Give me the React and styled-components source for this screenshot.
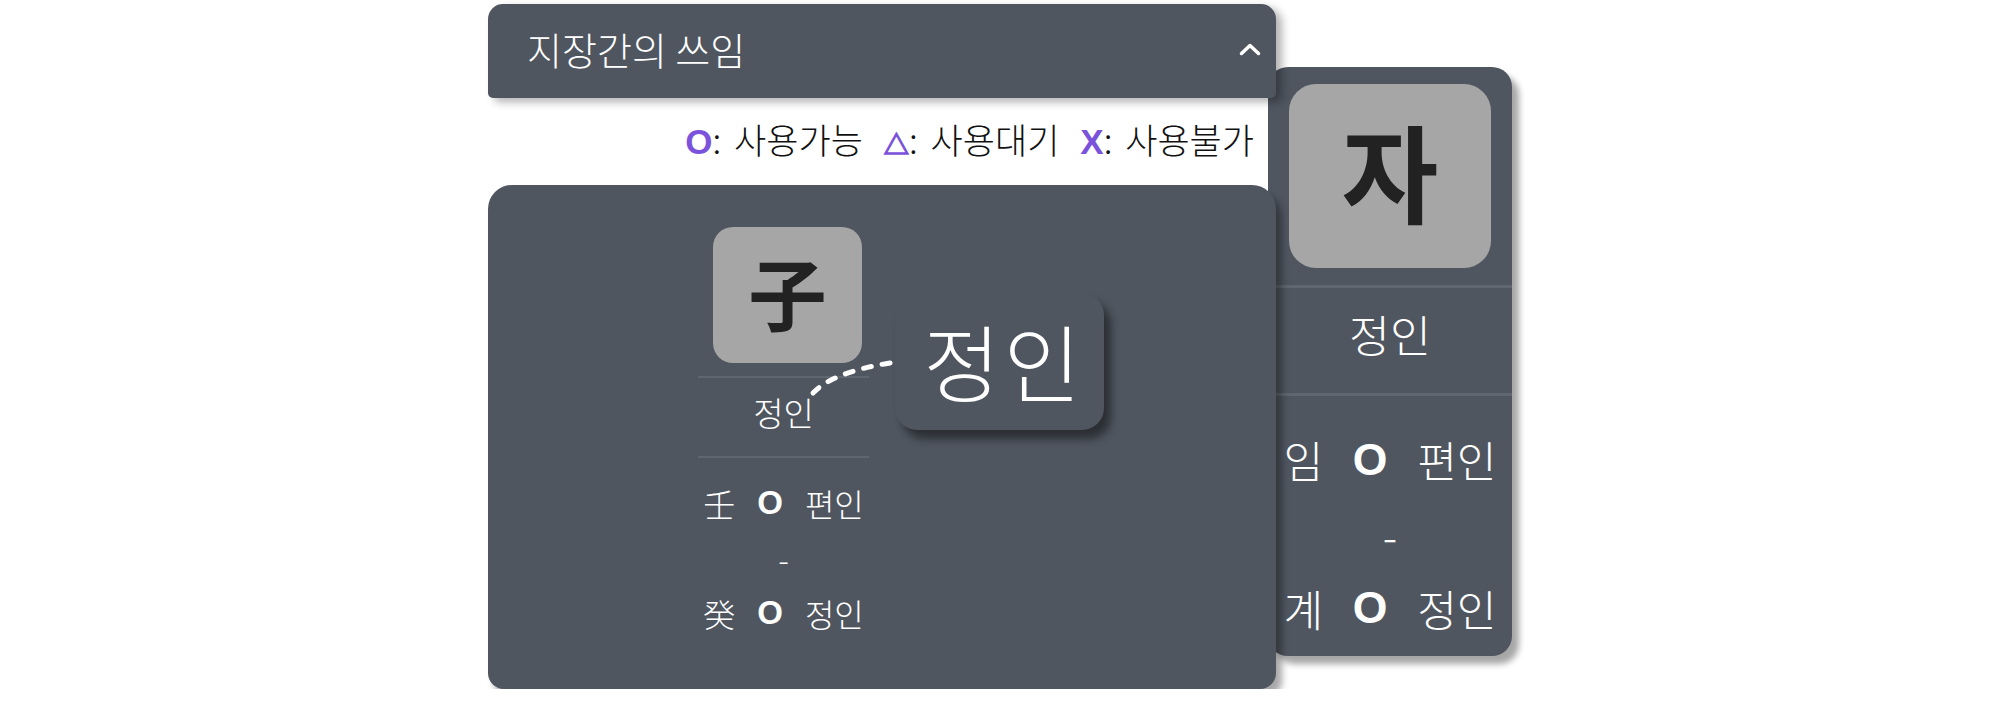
import React from "react";
import styled, { createGlobalStyle } from "styled-components";

const SLATE = "#4f5660";
const STONE = "#a6a6a6";
const INK = "#222222";
const RULE = "#5f6670";
const VIOLET = "#7b52db";
const FONT = `"Noto Sans CJK KR", "Noto Sans", sans-serif`;
const LATIN = `"Liberation Sans", "Noto Sans CJK KR", sans-serif`;

// scale a base pixel value by the pillar's magnification
const px = (n) => (p) => `${Math.round(n * p.$s * 100) / 100}px`;

const GlobalStyle = createGlobalStyle`
  html, body { margin: 0; padding: 0; background: #fff; }
  body { font-family: ${FONT}; }
  * { box-sizing: border-box; }
`;

const Stage = styled.div`
  display: flex;
  justify-content: center;
  align-items: flex-start;
  padding-top: 4px;
`;

const Main = styled.section`
  position: relative;
  z-index: 2;
  width: 788px;
  display: flex;
  flex-direction: column;
`;

const Header = styled.header`
  height: 94px;
  display: flex;
  align-items: center;
  justify-content: space-between;
  padding: 0 15px 4px 39px;
  background: ${SLATE};
  border-radius: 15px 15px 5px 5px;
  box-shadow: 6px 4px 8px rgba(0, 0, 0, 0.3);
  color: #fff;
`;

const Title = styled.h2`
  margin: 0;
  font-size: 38px;
  font-weight: 300;
  line-height: 1;
`;

const Legend = styled.div`
  height: 87px;
  display: flex;
  justify-content: flex-end;
  align-items: center;
  gap: 21px;
  padding: 0 22px 6px 0;
  font-size: 35px;
  font-weight: 300;
  color: #111;
`;

const LegendItem = styled.span`
  white-space: pre;
  word-spacing: 5px;
`;

const Mark = styled.b`
  color: ${VIOLET};
  font-weight: 700;
  font-family: ${(p) => (p.$shape ? FONT : LATIN)};
  font-size: ${(p) => (p.$shape ? "0.72em" : "1em")};
  -webkit-text-stroke: ${(p) => (p.$shape ? `1.3px ${VIOLET}` : "0")};
`;

const Board = styled.div`
  position: relative;
  height: 504px;
  display: grid;
  grid-template-columns: repeat(4, 1fr);
  align-items: start;
  padding-top: 42px;
  background: ${SLATE};
  border-radius: 24px 24px 16px 16px;
  box-shadow: 6px 8px 7px rgba(0, 0, 0, 0.35);
`;

const Pillar = styled.div`
  grid-column: ${(p) => p.$col || "auto"};
  display: flex;
  flex-direction: column;
  align-items: center;
  color: #fff;
`;

const Stem = styled.div`
  width: ${px(149)};
  height: ${px(136)};
  margin-left: ${(p) => p.$nudge || 0}px;
  padding-bottom: ${px(9)};
  border-radius: ${px(20)};
  background: ${STONE};
  color: ${INK};
  display: flex;
  align-items: center;
  justify-content: center;
  font-size: ${px(78)};
  font-weight: 700;
  line-height: 1;
`;

const Rule = styled.div`
  align-self: stretch;
  height: ${px(2)};
  margin: ${(p) => (p.$top ? px(13)(p) : "0")} ${(p) => p.$inset}px 0;
  background: ${RULE};
`;

const Ten = styled.div`
  height: ${px(78)};
  padding-bottom: ${px(9)};
  display: flex;
  align-items: center;
  justify-content: center;
  font-size: ${px(33)};
  font-weight: 300;
  line-height: 1;
`;

const Rows = styled.div`
  padding-top: ${(p) => p.$top}px;
  display: flex;
  flex-direction: column;
  align-items: center;
`;

const Row = styled.div`
  height: ${px(55)};
  display: flex;
  align-items: center;
  gap: ${px(22)};
  font-size: ${px(32)};
  font-weight: 300;
  line-height: 1;
`;

const Sign = styled.b`
  font-family: ${LATIN};
  font-size: ${px(33)};
  font-weight: 700;
`;

const Callout = styled.div`
  position: absolute;
  z-index: 3;
  left: 407px;
  top: 108px;
  width: 209px;
  height: 137px;
  padding: 0 0 4px 8px;
  border-radius: 22px;
  background: ${SLATE};
  box-shadow: 7px 9px 8px rgba(0, 0, 0, 0.45);
  display: flex;
  align-items: center;
  justify-content: center;
  font-size: 84px;
  font-weight: 300;
  letter-spacing: 3px;
  line-height: 1;
  color: #fff;
`;

const Leader = styled.svg`
  position: absolute;
  inset: 0;
  width: 100%;
  height: 100%;
  z-index: 2;
  pointer-events: none;
  overflow: visible;
`;

const Loupe = styled.aside`
  position: relative;
  z-index: 1;
  width: 244px;
  margin: 63px 0 0 -8px;
  padding: 17px 0 10px;
  background: ${SLATE};
  border-radius: 20px;
  box-shadow: 7px 8px 6px rgba(0, 0, 0, 0.35);
`;

function Chevron() {
  return (
    <svg width="22" height="13" viewBox="0 0 22 13" fill="none">
      <path d="M2.5 10.5 L11 2.5 L19.5 10.5" stroke="#fff" strokeWidth="3.5" strokeLinecap="round" strokeLinejoin="round" />
    </svg>
  );
}

function PillarCard({ s, inset, col, nudge, rowsTop, stem, ten, rows }) {
  return (
    <Pillar $s={s} $col={col}>
      <Stem $s={s} $nudge={nudge}>{stem}</Stem>
      <Rule $s={s} $inset={inset} $top />
      <Ten $s={s}>{ten}</Ten>
      <Rule $s={s} $inset={inset} />
      <Rows $top={rowsTop}>
        {rows.map((r, i) =>
          r ? (
            <Row $s={s} key={i}>
              <span>{r[0]}</span>
              <Sign $s={s}>{r[1]}</Sign>
              <span>{r[2]}</span>
            </Row>
          ) : (
            <Row $s={s} key={i}>-</Row>
          )
        )}
      </Rows>
    </Pillar>
  );
}

export default function App() {
  return (
    <>
      <GlobalStyle />
      <Stage>
        <Main>
          <Header>
            <Title>지장간의 쓰임</Title>
            <Chevron />
          </Header>
          <Legend>
            <LegendItem><Mark>O</Mark>: 사용가능</LegendItem>
            <LegendItem><Mark $shape>△</Mark>: 사용대기</LegendItem>
            <LegendItem><Mark>X</Mark>: 사용불가</LegendItem>
          </Legend>
          <Board>
            <PillarCard
              s={1}
              inset={13}
              col={2}
              nudge={8}
              rowsTop={17}
              stem="子"
              ten="정인"
              rows={[["壬", "O", "편인"], null, ["癸", "O", "정인"]]}
            />
            <Leader viewBox="0 0 788 504" preserveAspectRatio="none">
              <path
                d="M325 208 Q345 187 402 178"
                stroke="#fff"
                strokeWidth="5"
                fill="none"
                strokeLinecap="round"
                strokeDasharray="8 11"
              />
            </Leader>
            <Callout>정인</Callout>
          </Board>
        </Main>
        <Loupe>
          <PillarCard
            s={1.35}
            inset={0}
            rowsTop={27}
            stem="자"
            ten="정인"
            rows={[["임", "O", "편인"], null, ["계", "O", "정인"]]}
          />
        </Loupe>
      </Stage>
    </>
  );
}
